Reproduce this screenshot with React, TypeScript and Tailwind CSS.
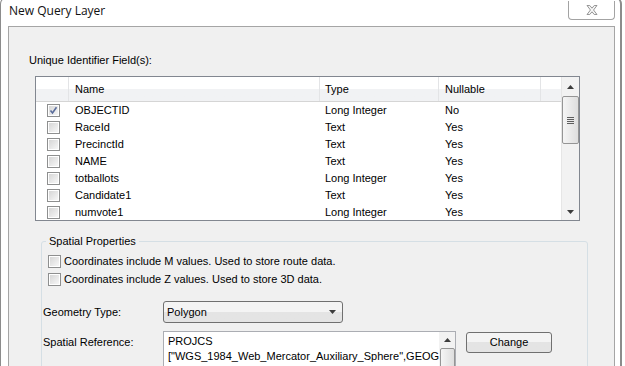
import React from "react";

type Field = { name: string; type: string; nullable: string; checked?: boolean };

const fields: Field[] = [
  { name: "OBJECTID", type: "Long Integer", nullable: "No", checked: true },
  { name: "RaceId", type: "Text", nullable: "Yes" },
  { name: "PrecinctId", type: "Text", nullable: "Yes" },
  { name: "NAME", type: "Text", nullable: "Yes" },
  { name: "totballots", type: "Long Integer", nullable: "Yes" },
  { name: "Candidate1", type: "Text", nullable: "Yes" },
  { name: "numvote1", type: "Long Integer", nullable: "Yes" },
];

function CheckBox({ checked }: { checked?: boolean }) {
  return (
    <div className="flex h-[13px] w-[13px] shrink-0 items-center justify-center border border-[#8e8f8f] bg-white p-px">
      <div className="relative h-full w-full bg-gradient-to-br from-[#d6d6d6] to-[#f7f7f7]">
        {checked && (
          <svg viewBox="0 0 9 9" className="absolute inset-0 h-full w-full">
            <path d="M1.5 4.5 L3.5 7 L7.5 1.2" fill="none" stroke="#5a6d9c" strokeWidth="1.6" />
          </svg>
        )}
      </div>
    </div>
  );
}

function Arrow({ down }: { down?: boolean }) {
  return (
    <svg width="7" height="4" viewBox="0 0 7 4">
      <path d={down ? "M0 0 H7 L3.5 4 Z" : "M3.5 0 L7 4 H0 Z"} fill="#3c3c3c" />
    </svg>
  );
}

function Grip() {
  return (
    <div className="flex flex-col gap-px">
      <div className="h-px w-[7px] bg-[#5d5d5d]" />
      <div className="h-px w-[7px] bg-[#5d5d5d]" />
      <div className="h-px w-[7px] bg-[#5d5d5d]" />
      <div className="h-px w-[7px] bg-[#5d5d5d]" />
    </div>
  );
}

export default function App() {
  return (
    <div className="h-[366px] w-[625px] overflow-hidden bg-white font-['Liberation_Sans',sans-serif] text-[11px] text-black">
      <div className="-mt-[3px] h-[400px] w-[622px] rounded-t-[7px] border-t border-l border-r-2 border-[#8c8c8c] bg-white">
        <div className="flex h-[28px] items-start justify-between pt-[3px]">
          <div className="pl-[8px] pt-[3px] font-['Open_Sans',sans-serif] text-[12px] leading-[14px] text-[#111]">
            New Query Layer
          </div>
          <div className="mr-[5px] flex h-[19px] w-[47px] items-center justify-center rounded-b-[4px] border border-t-0 border-[#a3a3a3] bg-white">
            <svg width="12" height="10" viewBox="0 0 13 11">
              <path
                d="M1 0.5 H4 L6.5 3.5 L9 0.5 H12 L8.2 5.5 L12 10.5 H9 L6.5 7.5 L4 10.5 H1 L4.8 5.5 Z"
                fill="#f7f7f7"
                stroke="#8a8a8a"
                strokeWidth="1"
              />
            </svg>
          </div>
        </div>

        <div className="ml-[7px] h-[360px] w-[607px] border border-[#a5a5a5] bg-[#f0f0f0]">
          <div className="pl-[20px] pt-[27px] leading-[13px]">Unique Identifier Field(s):</div>

          <div className="ml-[26px] mt-[9px] flex h-[145px] w-[545px] overflow-hidden border border-[#828790] bg-white">
            <div className="w-[525px]">
              <div className="flex h-[25px] border-b border-[#d5d5d5] bg-gradient-to-b from-white from-50% to-[#f1f2f4] to-50%">
                <div className="w-[33px] border-r border-[#e3e4e6]" />
                <div className="flex w-[251px] items-center border-r border-[#e3e4e6] pl-[6px]">Name</div>
                <div className="flex w-[119px] items-center border-r border-[#e3e4e6] pl-[5px]">Type</div>
                <div className="flex w-[102px] items-center border-r border-[#e3e4e6] pl-[6px]">Nullable</div>
                <div className="flex-1" />
              </div>
              {fields.map((f) => (
                <div key={f.name} className="flex h-[17px] items-center">
                  <div className="flex w-[33px] justify-center pl-px">
                    <CheckBox checked={f.checked} />
                  </div>
                  <div className="w-[251px] pl-[6px]">{f.name}</div>
                  <div className="w-[119px] pl-[5px]">{f.type}</div>
                  <div className="w-[102px] pl-[6px]">{f.nullable}</div>
                </div>
              ))}
            </div>
            <div className="flex w-[18px] flex-col border-l border-[#e6e6e6] bg-[#f2f2f2]">
              <div className="flex h-[19px] items-center justify-center">
                <Arrow />
              </div>
              <div className="flex h-[48px] items-center justify-center rounded-[2px] border border-[#959595] bg-gradient-to-r from-[#f5f5f5] to-[#dedede]">
                <Grip />
              </div>
              <div className="flex-1" />
              <div className="flex h-[17px] items-center justify-center">
                <Arrow down />
              </div>
            </div>
          </div>

          <div className="relative ml-[32px] mt-[20px] h-[200px] w-[547px] rounded-[3px] border border-[#d5dfe5]">
            <div className="absolute -top-[8px] left-[4px] bg-[#f0f0f0] px-[3px] leading-[14px]">Spatial Properties</div>
            <div className="pl-[6px] pt-[10px]">
              <div className="flex h-[18px] items-center gap-[3px]">
                <CheckBox />
                <span>Coordinates include M values. Used to store route data.</span>
              </div>
              <div className="flex h-[18px] items-center gap-[3px]">
                <CheckBox />
                <span>Coordinates include Z values. Used to store 3D data.</span>
              </div>
            </div>

            <div className="-ml-[1px] mt-[13px] flex items-center">
              <div className="w-[122px] pl-[2px]">Geometry Type:</div>
              <div className="flex h-[22px] w-[180px] items-center justify-between rounded-[3px] border border-[#707070] bg-gradient-to-b from-[#f4f4f4] from-50% to-[#e4e4e4] to-50% pl-[3px] pr-[6px]">
                <span>Polygon</span>
                <Arrow down />
              </div>
            </div>

            <div className="-ml-[1px] mt-[8px] flex items-start">
              <div className="w-[122px] pl-[2px] pt-[3px]">Spatial Reference:</div>
              <div className="flex h-[60px] w-[293px] border border-[#abadb3] bg-white">
                <div className="flex-1 pl-[4px] pt-[2px] leading-[15px]">
                  PROJCS
                  <br />
                  ["WGS_1984_Web_Mercator_Auxiliary_Sphere",GEOG
                  <br />
                  CS["GCS_WGS_1984",DATUM
                </div>
                <div className="flex w-[19px] flex-col items-center bg-[#f2f2f2]">
                  <div className="flex h-[16px] items-center">
                    <Arrow />
                  </div>
                  <div className="h-[30px] w-[15px] rounded-[2px] border border-[#959595] bg-gradient-to-r from-[#f5f5f5] to-[#dedede]" />
                </div>
              </div>
              <div className="ml-[10px] mt-[1px] flex h-[21px] w-[86px] items-center justify-center rounded-[3px] border border-[#707070] bg-gradient-to-b from-[#f4f4f4] from-50% to-[#e4e4e4] to-50%">
                Change
              </div>
            </div>
          </div>
        </div>
      </div>
    </div>
  );
}
